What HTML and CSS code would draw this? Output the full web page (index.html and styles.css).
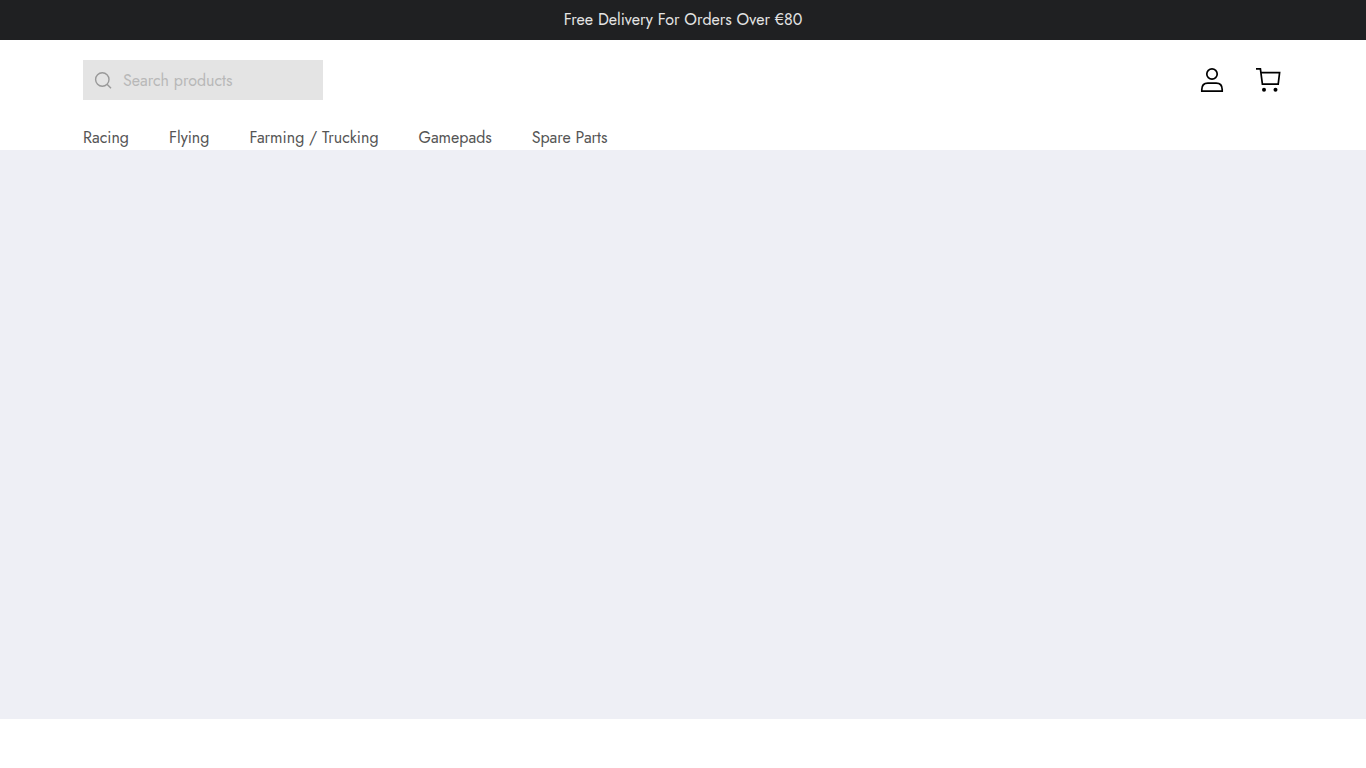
FILE: index.html
```html
<!DOCTYPE html>
<html lang="en">
<head>
<meta charset="utf-8">
<title>Shop</title>
<link rel="stylesheet" href="styles.css">
</head>
<body>
<div class="promo"><span class="promo-text">Free Delivery For Orders Over €80</span></div>
<header class="header">
  <div class="toolbar">
    <label class="search">
      <svg class="search-icon" width="20" height="20" viewBox="0 0 20 20"><circle cx="9.3" cy="9.5" r="6.7"/><path d="M14 14.300l4 4"/></svg>
      <input class="search-input" type="text" placeholder="Search products">
    </label>
    <div class="actions">
      <svg class="action" width="28" height="28" viewBox="0 0 28 28"><circle cx="14" cy="8" r="5.2"/><path d="M3.8 25.2V23.600c0-4 2.400-6.500 6-6.500h8.400c3.600 0 6 2.500 6 6.500v1.600z"/></svg>
      <svg class="action" width="28" height="28" viewBox="0 0 28 28"><path d="M2 2.800h4.400L8.400 18.200h15.800L25.600 6.600H7"/><circle class="wheel" cx="10" cy="23.700" r="2"/><circle class="wheel" cx="21.500" cy="23.700" r="2"/></svg>
    </div>
  </div>
  <nav class="nav">
    <a class="nav-link">Racing</a>
    <a class="nav-link">Flying</a>
    <a class="nav-link">Farming / Trucking</a>
    <a class="nav-link">Gamepads</a>
    <a class="nav-link">Spare Parts</a>
  </nav>
</header>
<main class="hero"></main>
</body>
</html>
```
FILE: styles.css
```css
* { box-sizing: border-box; }
body { margin: 0; background: #fff; font: 16px/24px Jost, Lato, sans-serif; color: #555; overflow: hidden; }
.promo { height: 40px; background: #1f2022; color: #e4e4e4; display: flex; align-items: center; justify-content: center; white-space: nowrap; }
.header { height: 110px; padding: 20px 84px 0 83px; }
.toolbar { display: flex; justify-content: space-between; align-items: center; height: 40px; }
.search { display: flex; align-items: center; gap: 10px; width: 240px; height: 40px; padding-left: 10px; background: #e4e4e4; }
.search-icon { fill: none; stroke: #999; stroke-width: 1.4; }
.search-input { width: 180px; height: 40px; padding: 1px 0 0; border: 0; background: none; font: inherit; outline: none; }
.search-input::placeholder { color: #b8b8b8; opacity: 1; }
.actions { display: flex; gap: 28px; }
.action { fill: none; stroke: #000; stroke-width: 1.7; }
.wheel { fill: #000; stroke: none; }
.nav { display: flex; gap: 40px; margin-top: 26px; white-space: nowrap; }
.nav-link { color: #555; }
.hero { height: 569px; background: #eeeff5; }
```
